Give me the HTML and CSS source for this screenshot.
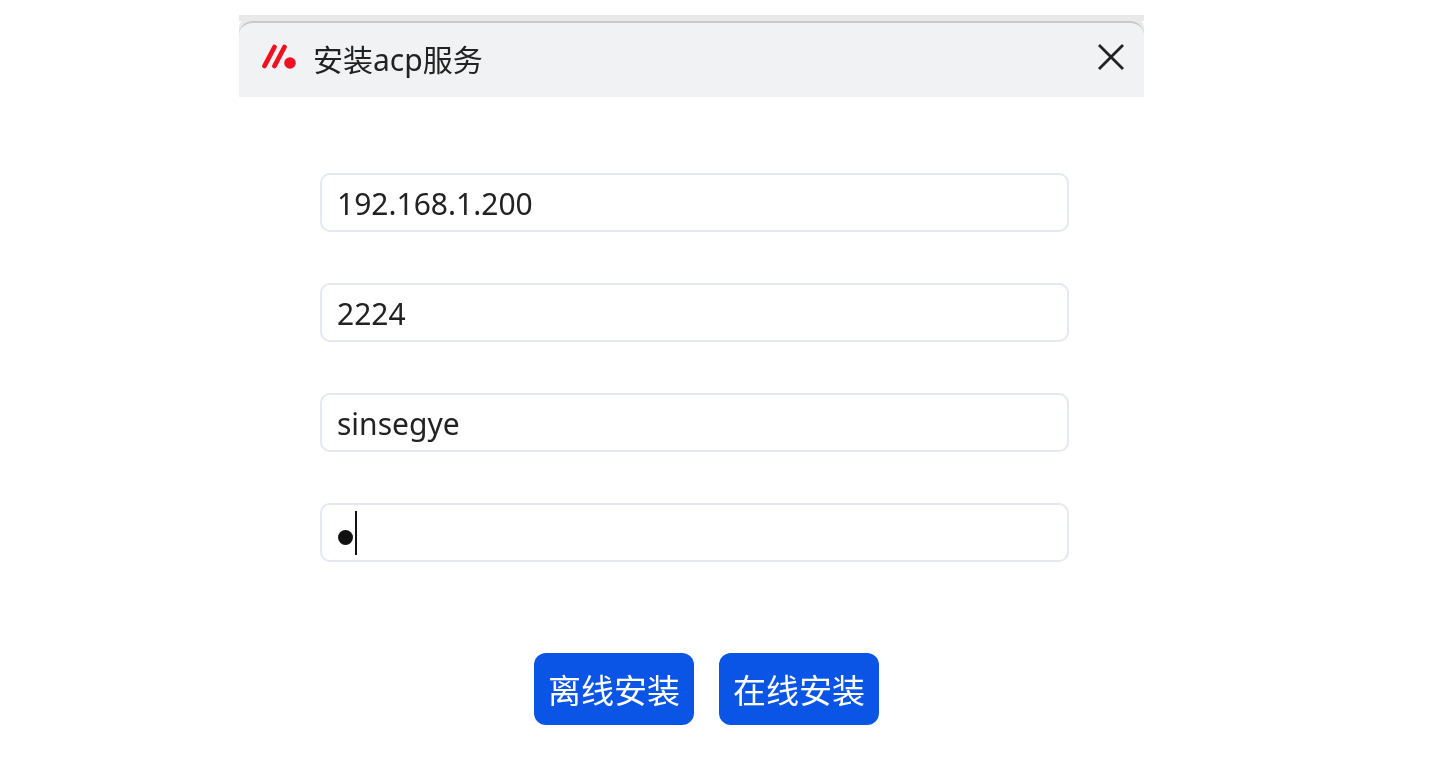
FILE: index.html
```html
<!DOCTYPE html>
<html lang="zh">
<head>
<meta charset="utf-8">
<title>安装acp服务</title>
<link rel="stylesheet" href="styles.css">
</head>
<body>
<main class="dialog">
  <div class="top-edge"></div>
  <header class="titlebar">
    <svg class="logo" width="38" height="38" viewBox="0 0 38 38" aria-hidden="true">
      <path d="M3.5 25 L13.5 6 M13.5 25 L23.5 6" stroke="#f01020" stroke-width="4.8" stroke-linecap="round" fill="none"/>
      <circle cx="29" cy="22" r="5.8" fill="#f01020"/>
    </svg>
    <span class="title">安装acp服务</span>
    <svg class="close" width="28" height="28" viewBox="0 0 28 28" aria-hidden="true">
      <path d="M2 2 L26 26 M26 2 L2 26" stroke="#222" stroke-width="2.8" fill="none"/>
    </svg>
  </header>
  <form class="form">
    <div class="field">192.168.1.200</div>
    <div class="field">2224</div>
    <div class="field">sinsegye</div>
    <div class="field"><span class="dot"></span><span class="caret"></span></div>
    <div class="actions">
      <button type="button" class="btn">离线安装</button>
      <button type="button" class="btn">在线安装</button>
    </div>
  </form>
</main>
</body>
</html>
```
FILE: styles.css
```css
* { box-sizing: border-box; }
html, body { margin: 0; padding: 0; background: #fff; }
body {
  height: 761px;
  overflow: hidden;
  padding: 15px 0 0 239px;
  font-family: "Noto Sans", "Noto Sans CJK SC", sans-serif;
  color: #222;
}
.dialog { width: 905px; filter: blur(0.5px); }
.top-edge { height: 6px; background: #e9e9ea; }
.titlebar {
  height: 76px;
  background: #f1f2f4;
  border-top: 2px solid #c9c9cb;
  border-radius: 14px 14px 0 0;
  display: flex;
  align-items: center;
  padding: 0 19px 0 22px;
  box-shadow: 0 -6px 0 0 #e9e9ea;
}
.logo { flex: none; margin-right: -6px; }
.title { margin-left: 20px; margin-top: -1px; font-size: 30px; line-height: 1; color: #222; }
.close { margin-left: auto; margin-bottom: 6px; flex: none; }
.form {
  padding: 76px 51px 0 81px;
  display: flex;
  flex-direction: column;
  gap: 51px;
}
.field {
  width: 749px;
  height: 59px;
  border: 2px solid #e5e7f2;
  border-radius: 10px;
  padding: 2px 0 0 15px;
  display: flex;
  align-items: center;
  font-size: 30px;
  color: #222;
}
.dot {
  width: 15px;
  height: 15px;
  border-radius: 50%;
  background: #111;
  margin: 8px 0 0 1px;
}
.caret {
  width: 2px;
  height: 44px;
  background: #111;
  margin: -1px 0 0 2px;
}
.actions {
  display: flex;
  justify-content: center;
  gap: 25px;
  margin-top: 40px;
}
.btn {
  width: 160px;
  height: 72px;
  border: 0;
  border-radius: 12px;
  background: #0b55e6;
  color: #fff;
  font-family: inherit;
  font-size: 33px;
  padding: 0;
}
```
